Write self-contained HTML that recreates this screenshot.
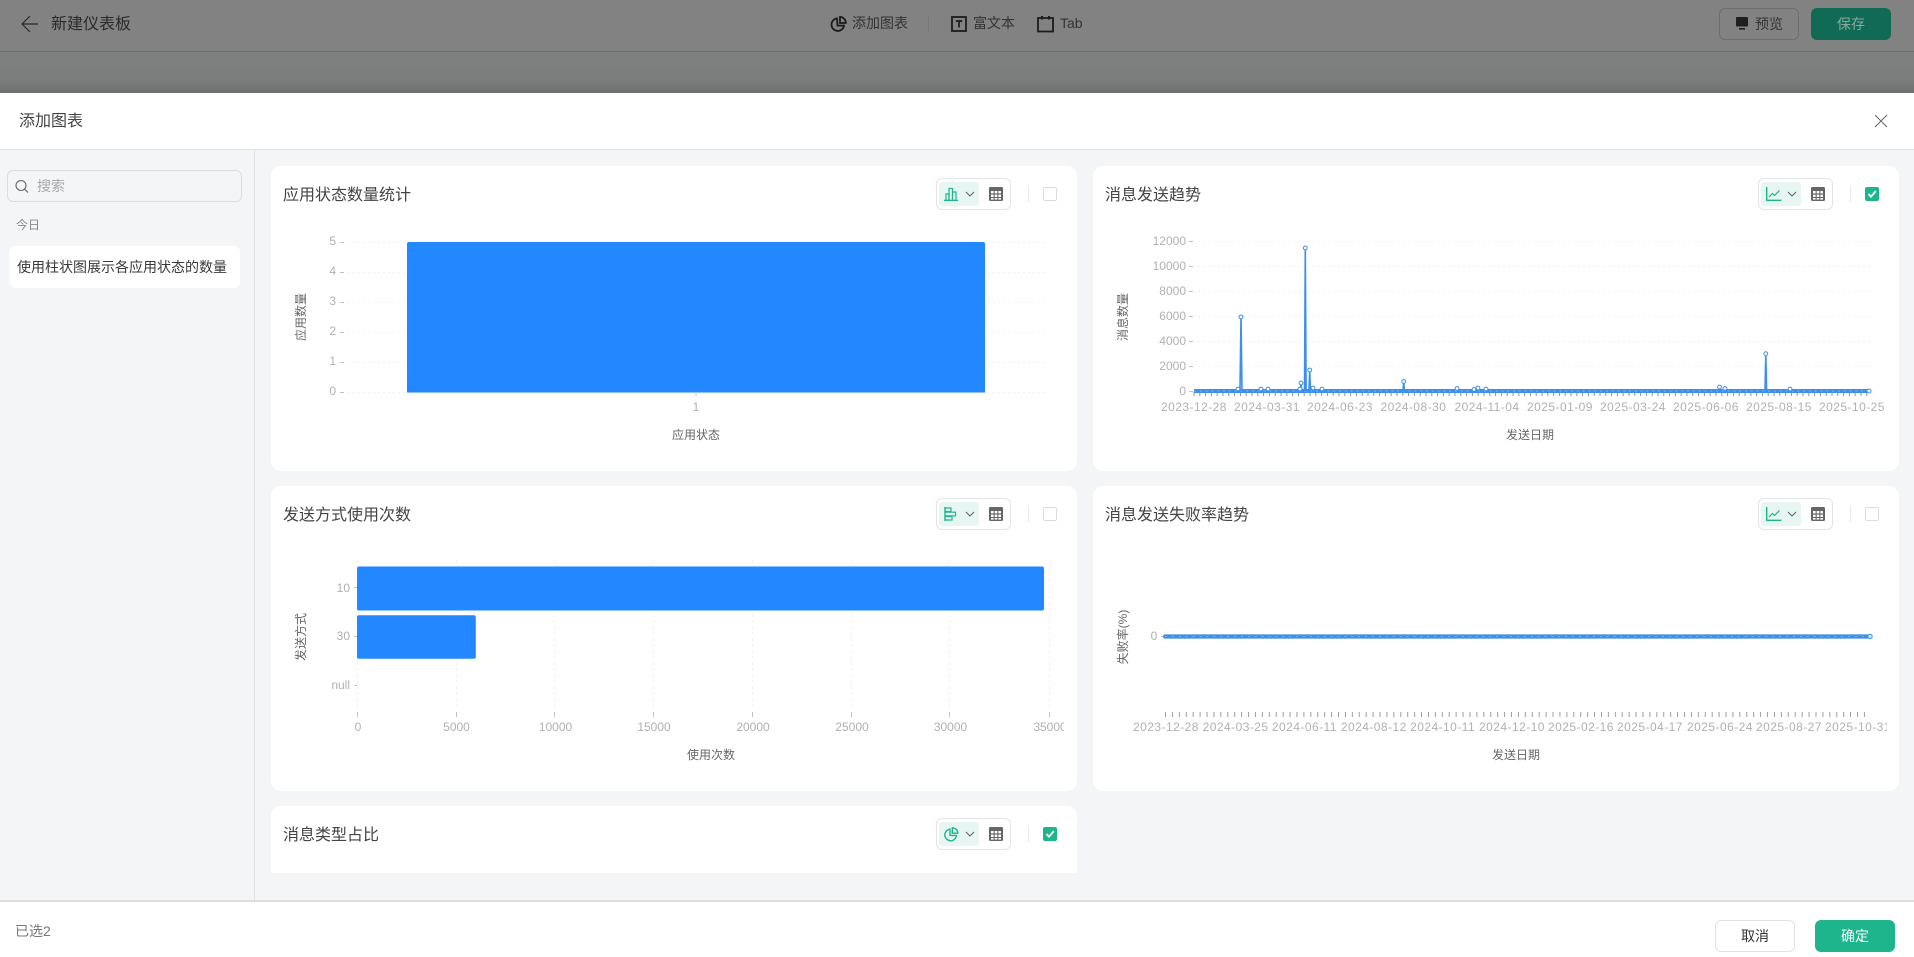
<!DOCTYPE html>
<html lang="zh">
<head>
<meta charset="utf-8">
<title>新建仪表板</title>
<style>
html,body{margin:0;padding:0;width:1914px;height:957px;overflow:hidden;background:#fff;font-family:"Liberation Sans","Noto Sans CJK SC",sans-serif;}
.a{position:absolute;box-sizing:border-box;}
.t{position:absolute;white-space:nowrap;line-height:20px;height:20px;}
svg{position:absolute;left:0;top:0;}
.card{position:absolute;background:#fff;border-radius:10px;width:806px;height:305px;}
.title{font-size:16px;color:#444;}
.box{position:absolute;box-sizing:border-box;width:75px;height:32px;border:1px solid #e3e4e6;border-radius:6px;background:#fff;}
.hl{position:absolute;width:40px;height:24px;background:#e7f6f2;border-radius:3px;}
.div{position:absolute;width:1px;height:16px;background:#e9e9e9;}
.cb{position:absolute;box-sizing:border-box;width:14px;height:14px;border:1px solid #dcdcdc;border-radius:2px;background:#fff;}
.cb.on{background:#1fb58c;border-color:#1fb58c;}
</style>
</head>
<body>
<!-- dim top -->
<div class="a" style="left:0;top:0;width:1914px;height:51px;background:#828282;"></div>
<div class="a" style="left:0;top:51px;width:1914px;height:1px;background:#6f7070;"></div>
<div class="a" style="left:0;top:52px;width:1914px;height:41px;background:linear-gradient(#7f8181,#7b7d7d 70%,#6f716f);"></div>
<div class="t" style="left:51px;top:15px;font-size:16px;color:#2a2a2a;">新建仪表板</div>
<div class="t" style="left:852px;top:13px;font-size:14px;color:#333;">添加图表</div>
<div class="a" style="left:928px;top:16px;width:1px;height:16px;background:#767676;"></div>
<div class="t" style="left:973px;top:13px;font-size:14px;color:#333;">富文本</div>
<div class="t" style="left:1060px;top:13px;font-size:14px;color:#333;">Tab</div>
<div class="a" style="left:1719px;top:8px;width:80px;height:32px;border:1px solid #6e6e6e;border-radius:6px;"></div>
<div class="t" style="left:1755px;top:14px;font-size:14px;color:#333;">预览</div>
<div class="a" style="left:1811px;top:8px;width:80px;height:32px;background:#106a54;border-radius:6px;"></div>
<div class="t" style="left:1837px;top:14px;font-size:14px;color:#86aa9f;">保存</div>

<!-- modal -->
<div class="a" style="left:0;top:93px;width:1914px;height:57px;background:#fff;border-bottom:1px solid #e2e3e5;"></div>
<div class="t" style="left:19px;top:112px;font-size:16px;color:#444;">添加图表</div>
<div class="a" style="left:0;top:150px;width:1914px;height:750px;background:#f4f5f7;"></div>
<div class="a" style="left:254px;top:150px;width:1px;height:750px;background:#dfe0e2;"></div>
<div class="a" style="left:0;top:900px;width:1914px;height:2px;background:#dedede;"></div>

<!-- sidebar -->
<div class="a" style="left:7px;top:170px;width:235px;height:32px;border:1px solid #dcdde0;border-radius:6px;background:#f4f5f7;"></div>
<div class="t" style="left:37px;top:176px;font-size:14px;color:#a8a8a8;">搜索</div>
<div class="t" style="left:16px;top:215px;font-size:12px;color:#888;">今日</div>
<div class="a" style="left:9px;top:246px;width:231px;height:42px;background:#fff;border-radius:6px;"></div>
<div class="t" style="left:17px;top:257px;font-size:14px;color:#3a3a3a;">使用柱状图展示各应用状态的数量</div>

<!-- cards -->
<div class="card" style="left:271px;top:166px;"></div>
<div class="card" style="left:1093px;top:166px;"></div>
<div class="card" style="left:271px;top:486px;"></div>
<div class="card" style="left:1093px;top:486px;"></div>
<div class="card" style="left:271px;top:806px;height:67px;border-radius:10px 10px 0 0;"></div>

<div class="t title" style="left:283px;top:186px;">应用状态数量统计</div>
<div class="t title" style="left:1105px;top:186px;">消息发送趋势</div>
<div class="t title" style="left:283px;top:506px;">发送方式使用次数</div>
<div class="t title" style="left:1105px;top:506px;">消息发送失败率趋势</div>
<div class="t title" style="left:283px;top:826px;">消息类型占比</div>

<!-- toolbars -->
<div class="box" style="left:936px;top:178px;"></div><div class="hl" style="left:939px;top:182px;"></div><div class="div" style="left:1028px;top:186px;"></div><div class="cb" style="left:1043px;top:187px;"></div>
<div class="box" style="left:1758px;top:178px;"></div><div class="hl" style="left:1761px;top:182px;"></div><div class="div" style="left:1850px;top:186px;"></div><div class="cb on" style="left:1865px;top:187px;"></div>
<div class="box" style="left:936px;top:498px;"></div><div class="hl" style="left:939px;top:502px;"></div><div class="div" style="left:1028px;top:506px;"></div><div class="cb" style="left:1043px;top:507px;"></div>
<div class="box" style="left:1758px;top:498px;"></div><div class="hl" style="left:1761px;top:502px;"></div><div class="div" style="left:1850px;top:506px;"></div><div class="cb" style="left:1865px;top:507px;"></div>
<div class="box" style="left:936px;top:818px;"></div><div class="hl" style="left:939px;top:822px;"></div><div class="div" style="left:1028px;top:826px;"></div><div class="cb on" style="left:1043px;top:827px;"></div>

<!-- footer -->
<div class="t" style="left:15px;top:921px;font-size:14px;color:#777;">已选2</div>
<div class="a" style="left:1715px;top:920px;width:80px;height:32px;border:1px solid #e2e2e2;border-radius:6px;background:#fff;"></div>
<div class="t" style="left:1741px;top:926px;font-size:14px;color:#333;">取消</div>
<div class="a" style="left:1815px;top:920px;width:80px;height:32px;border-radius:6px;background:#1fb58c;"></div>
<div class="t" style="left:1841px;top:926px;font-size:14px;color:#fff;">确定</div>

<svg width="1914" height="957" viewBox="0 0 1914 957" font-family="'Liberation Sans','Noto Sans CJK SC',sans-serif">
<defs>
<pattern id="tk2" x="1193.5" y="392" width="5.8" height="4" patternUnits="userSpaceOnUse"><rect width="1" height="4" fill="#8f9398"/></pattern>
<pattern id="tk4" x="1165" y="712" width="6.92" height="5" patternUnits="userSpaceOnUse"><rect width="1" height="5" fill="#9a9ea3"/></pattern>
<clipPath id="c3"><rect x="271" y="486" width="793" height="305"/></clipPath>
<clipPath id="c4"><rect x="1093" y="486" width="794" height="305"/></clipPath>
<g id="calc"><rect x="0" y="0" width="14" height="14" rx="1.5" fill="#666"/><rect x="2" y="4" width="2.6" height="2.4" fill="#fff"/><rect x="5.7" y="4" width="2.6" height="2.4" fill="#fff"/><rect x="9.4" y="4" width="2.6" height="2.4" fill="#fff"/><rect x="2" y="7.6" width="2.6" height="2.4" fill="#fff"/><rect x="5.7" y="7.6" width="2.6" height="2.4" fill="#fff"/><rect x="9.4" y="7.6" width="2.6" height="2.4" fill="#fff"/><rect x="2" y="11" width="2.6" height="1.6" fill="#fff"/><rect x="5.7" y="11" width="2.6" height="1.6" fill="#fff"/><rect x="9.4" y="11" width="2.6" height="1.6" fill="#fff"/></g>
<path id="chev" d="M-4 -2L0 2L4 -2" fill="none" stroke="#666" stroke-width="1.1"/>
<g id="bar" fill="none" stroke="#1fb58c" stroke-width="1.2"><path d="M0 13.4H14" stroke-width="1.4"/><path d="M2 13V7H5V13"/><path d="M5 13V1.5H8.5V13"/><path d="M8.5 13V5H12V13"/></g>
<g id="line" fill="none" stroke="#1fb58c" stroke-width="1.2"><path d="M.7 0V13.3H15.5" stroke-width="1.4"/><path d="M3 10L6.5 6.5L8.5 8.5L13.5 3.5"/></g>
<g id="hbar" fill="none" stroke="#1fb58c" stroke-width="1.2"><path d="M1 0V14" stroke-width="1.4"/><path d="M1 1H7V4.5H1"/><path d="M1 5.2H11.5V8.8H1"/><path d="M1 9.5H8V13H1"/></g>
<g id="pie" fill="none" stroke="#1fb58c" stroke-width="1.4"><path d="M6 2.2A5.8 5.8 0 1 0 12.4 8.4H6Z"/><path d="M8.3 .8A5.5 5.5 0 0 1 13.8 6.2H8.3Z"/></g>
</defs>

<!-- top bar icons -->
<path d="M30 16L22 24L30 32M22 24H38" fill="none" stroke="#2a2a2a" stroke-width="1.2"/>
<g transform="translate(831,16)" fill="none" stroke="#1c1c1c" stroke-width="1.8"><path d="M6 2.4A6.3 6.3 0 1 0 13 9.6H6.5Z"/><path d="M9 .9A6 6 0 0 1 14.8 7H9Z"/></g>
<g transform="translate(951,16)" fill="none" stroke="#1c1c1c"><rect x="1" y="1" width="14" height="14" stroke-width="1.8"/><path d="M4.8 5H11.2M8 5V11.5" stroke-width="1.7"/></g>
<g transform="translate(1037,16)" fill="none" stroke="#1c1c1c" stroke-width="1.8"><path d="M1 2H16V15.5H1Z"/><path d="M5 0V3.5M12 0V3.5" stroke-width="2"/></g>
<g transform="translate(1736,17)"><rect x="0" y="0" width="12" height="9.5" rx="1" fill="#1f1f1f"/><rect x="3" y="11" width="6" height="1.6" fill="#1f1f1f"/></g>
<g transform="translate(1875,115)"><path d="M0 0L12 12M12 0L0 12" stroke="#666" stroke-width="1" fill="none"/></g>
<g fill="none" stroke="#666" stroke-width="1.1"><circle cx="21" cy="185.5" r="5"/><path d="M24.6 189.2L28 192.5"/></g>

<!-- toolbar icons -->
<use href="#bar" x="944" y="187"/><use href="#chev" x="970" y="194"/><use href="#calc" x="989" y="187"/>
<use href="#line" x="1766" y="187"/><use href="#chev" x="1792" y="194"/><use href="#calc" x="1811" y="187"/>
<use href="#hbar" x="944" y="507"/><use href="#chev" x="970" y="514"/><use href="#calc" x="989" y="507"/>
<use href="#line" x="1766" y="507"/><use href="#chev" x="1792" y="514"/><use href="#calc" x="1811" y="507"/>
<use href="#pie" x="944" y="827"/><use href="#chev" x="970" y="834"/><use href="#calc" x="989" y="827"/>
<path d="M1868.5 194L1871 196.8L1875.8 191" fill="none" stroke="#fff" stroke-width="1.8"/>
<path d="M1046.5 834L1049 836.8L1053.8 831" fill="none" stroke="#fff" stroke-width="1.8"/>

<!-- Chart 1 -->
<g stroke="#f2f2f2" stroke-dasharray="2 3">
<path d="M348 242.5H1045M348 272.5H1045M348 302.5H1045M348 332.5H1045M348 362.5H1045M348 392.5H1045"/>
</g>
<path d="M407 392.500V244a2 2 0 0 1 2-2H983a2 2 0 0 1 2 2V392.500Z" fill="#2388ff"/>
<g font-size="12" fill="#b0b0b0" text-anchor="end">
<text x="336" y="245">5</text><text x="336" y="275">4</text><text x="336" y="305">3</text><text x="336" y="335">2</text><text x="336" y="365">1</text><text x="336" y="395">0</text>
</g>
<path d="M340 242.5H344M340 272.5H344M340 302.5H344M340 332.5H344M340 362.5H344M340 392.5H344M696 392V396" stroke="#c0c0c0"/>
<text x="696" y="411" font-size="12" fill="#b0b0b0" text-anchor="middle">1</text>
<text x="696" y="439" font-size="12" fill="#666" text-anchor="middle">应用状态</text>
<text transform="translate(305,317) rotate(-90)" font-size="12" fill="#666" text-anchor="middle">应用数量</text>

<!-- Chart 2 -->
<g stroke="#f2f2f2" stroke-dasharray="2 3"><path d="M1198 241.5H1870M1198 266.5H1870M1198 291.5H1870M1198 316.5H1870M1198 341.5H1870M1198 366.5H1870"/></g>
<g font-size="12" fill="#b0b0b0" text-anchor="end">
<text x="1186" y="245">12000</text><text x="1186" y="270">10000</text><text x="1186" y="295">8000</text><text x="1186" y="320">6000</text><text x="1186" y="345">4000</text><text x="1186" y="370">2000</text><text x="1186" y="395">0</text>
</g>
<path d="M1189 241.5H1193M1189 266.5H1193M1189 291.5H1193M1189 316.5H1193M1189 341.5H1193M1189 366.5H1193M1189 391.5H1193" stroke="#c0c0c0"/>
<rect x="1193.5" y="392" width="677" height="4" fill="url(#tk2)"/>
<path d="M1194 391H1870" stroke="#3d8fe8" stroke-width="4"/>
<path d="M1194 391H1870" stroke="#7db6f2" stroke-width="1" stroke-dasharray="2 3.8"/>
<path d="M1240 391L1241 317L1242 391M1300.3 391L1301 383L1301.7 391M1304.5 391L1305.3 248L1306.1 391M1309 391L1309.7 370L1310.4 391M1403 391L1403.7 381.5L1404.4 391M1765 391L1765.8 354L1766.6 391" fill="none" stroke="#3d8fe8" stroke-width="1.6"/>
<g fill="#fff" stroke="#3d8fe8" stroke-width="1">
<circle cx="1241" cy="317" r="1.900"/><circle cx="1305.3" cy="248" r="1.900"/><circle cx="1309.7" cy="370" r="1.900"/><circle cx="1301" cy="383" r="1.900"/><circle cx="1403.7" cy="381.5" r="1.900"/><circle cx="1765.8" cy="353.7" r="1.900"/>
<circle cx="1238" cy="389" r="1.900"/><circle cx="1261" cy="389" r="1.900"/><circle cx="1268" cy="389" r="1.900"/><circle cx="1300" cy="389" r="1.900"/><circle cx="1313" cy="388" r="1.900"/><circle cx="1322" cy="389" r="1.900"/><circle cx="1457" cy="388.5" r="1.900"/><circle cx="1474" cy="389.5" r="1.900"/><circle cx="1478" cy="388" r="1.900"/><circle cx="1486" cy="389" r="1.900"/><circle cx="1719.5" cy="387" r="1.900"/><circle cx="1725" cy="388.5" r="1.900"/><circle cx="1790" cy="389" r="1.900"/><circle cx="1869" cy="391" r="2"/>
</g>
<g font-size="12" fill="#b0b0b0" text-anchor="middle" letter-spacing=".45">
<text x="1194" y="411">2023-12-28</text><text x="1267" y="411">2024-03-31</text><text x="1340" y="411">2024-06-23</text><text x="1413.4" y="411">2024-08-30</text><text x="1487" y="411">2024-11-04</text><text x="1560" y="411">2025-01-09</text><text x="1633" y="411">2025-03-24</text><text x="1706" y="411">2025-06-06</text><text x="1779" y="411">2025-08-15</text><text x="1852" y="411">2025-10-25</text>
</g>
<text x="1530" y="439" font-size="12" fill="#666" text-anchor="middle">发送日期</text>
<text transform="translate(1127,317) rotate(-90)" font-size="12" fill="#666" text-anchor="middle">消息数量</text>

<!-- Chart 3 -->
<g stroke="#f2f2f2" stroke-dasharray="3 3"><path d="M357.500 560V710M456.500 560V710M554.500 560V710M653.500 560V710M752.500 560V710M851.500 560V710M949.500 560V710M1049.500 560V710"/></g>
<rect x="357" y="566.500" width="687" height="44" rx="2" fill="#2388ff"/>
<rect x="357" y="615.300" width="118.800" height="43.500" rx="2" fill="#2388ff"/>
<g font-size="12" fill="#b0b0b0" text-anchor="end"><text x="350" y="592">10</text><text x="350" y="640">30</text><text x="350" y="689">null</text></g>
<path d="M354 587.500H357M354 636.500H357M354 685.500H357" stroke="#c0c0c0"/>
<path d="M357.500 712V717M456.500 712V717M554.500 712V717M653.500 712V717M752.500 712V717M851.500 712V717M949.500 712V717M1049.500 712V717" stroke="#c0c0c0"/>
<g font-size="12" fill="#b0b0b0" text-anchor="middle" clip-path="url(#c3)">
<text x="358" y="731">0</text><text x="456.500" y="731">5000</text><text x="555.500" y="731">10000</text><text x="654" y="731">15000</text><text x="753" y="731">20000</text><text x="852" y="731">25000</text><text x="950.500" y="731">30000</text><text x="1050" y="731">35000</text>
</g>
<text x="711" y="759" font-size="12" fill="#666" text-anchor="middle">使用次数</text>
<text transform="translate(305,637) rotate(-90)" font-size="12" fill="#666" text-anchor="middle">发送方式</text>

<!-- Chart 4 -->
<text x="1154" y="640" font-size="12" fill="#b0b0b0" text-anchor="middle">0</text>
<path d="M1161 636.500H1165" stroke="#c0c0c0"/>
<path d="M1165 636.500H1870" stroke="#3d8fe8" stroke-width="4.200" stroke-linecap="round"/>
<path d="M1165 636.500H1870" stroke="#7db6f2" stroke-width="1" stroke-dasharray="2 4.900"/>
<circle cx="1870" cy="636.500" r="2.200" fill="#cfe3fa" stroke="#3d8fe8"/>
<rect x="1165" y="712" width="701" height="5" fill="url(#tk4)"/>
<g font-size="12" fill="#b0b0b0" text-anchor="middle" letter-spacing=".45" clip-path="url(#c4)">
<text x="1166" y="731">2023-12-28</text><text x="1235.600" y="731">2024-03-25</text><text x="1304.400" y="731">2024-06-11</text><text x="1373.800" y="731">2024-08-12</text><text x="1442.600" y="731">2024-10-11</text><text x="1512" y="731">2024-12-10</text><text x="1581" y="731">2025-02-16</text><text x="1650" y="731">2025-04-17</text><text x="1720" y="731">2025-06-24</text><text x="1789" y="731">2025-08-27</text><text x="1858" y="731">2025-10-31</text>
</g>
<text x="1516" y="759" font-size="12" fill="#666" text-anchor="middle">发送日期</text>
<text transform="translate(1127,637) rotate(-90)" font-size="12" fill="#666" text-anchor="middle">失败率(%)</text>
</svg>
</body>
</html>
